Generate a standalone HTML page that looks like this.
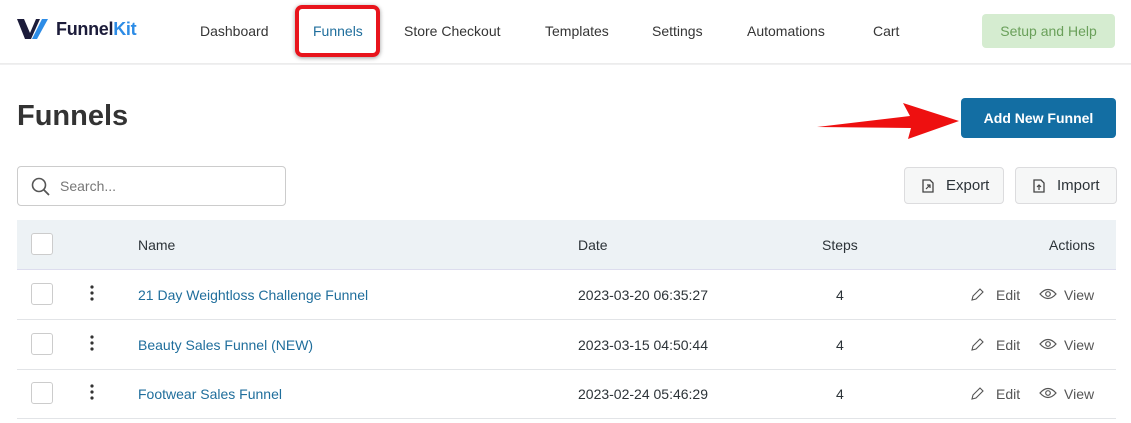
<!DOCTYPE html>
<html><head><meta charset="utf-8"><style>
*{box-sizing:border-box;margin:0;padding:0}
body{width:1131px;height:423px;background:#f0f0f1;font-family:"Liberation Sans",sans-serif;position:relative;overflow:hidden;color:#2c3338}
.top{position:absolute;left:0;top:0;width:1131px;height:64px;background:#fff;border-bottom:1px solid #ececec}
.nav{position:absolute;top:23px;font-size:14px;color:#353535}
.main{position:absolute;left:0;top:65px;width:1131px;height:358px;background:#fff}
.abs{position:absolute}
.row{position:absolute;left:17px;width:1099px;height:50px;border-bottom:1px solid #e2e4e7;font-size:14px}
.cb{position:absolute;left:14px;width:22px;height:22px;border:1px solid #ccc;border-radius:3px;background:#fff}
.btn{position:absolute;border:1px solid #dcdcde;border-radius:4px;background:#f6f7f7;font-size:15px;color:#2c3338}
</style></head><body>
<div class="top">
 <svg class="abs" style="left:17px;top:18px" width="34" height="22" viewBox="0 0 34 22"><path d="M0 1h7l6 14 6-14h4l-9 20h-6z" fill="#1c1c3a"/><path d="M25 1h6l-11 20h-5z" fill="#2d8ce6"/></svg>
 <div class="abs" style="left:56px;top:19px;font-size:18px;font-weight:bold;color:#1c1c3a;letter-spacing:-0.3px">Funnel<span style="color:#2d8ce6">Kit</span></div>
 <div class="nav" style="left:200px">Dashboard</div>
 <div class="abs" style="left:295px;top:5px;width:85px;height:52px;border:4px solid #e8141c;border-radius:7px;box-shadow:0 1px 4px rgba(0,0,0,.4)"></div>
 <div class="nav" style="left:313px;color:#1f6e9c">Funnels</div>
 <div class="nav" style="left:404px">Store Checkout</div>
 <div class="nav" style="left:545px">Templates</div>
 <div class="nav" style="left:652px">Settings</div>
 <div class="nav" style="left:747px">Automations</div>
 <div class="nav" style="left:873px">Cart</div>
 <div class="abs" style="left:982px;top:14px;width:133px;height:34px;background:#d5ecd0;border-radius:4px;color:#6aa05a;font-size:14px;text-align:center;line-height:34px">Setup and Help</div>
</div>
<div class="main">
 <div class="abs" style="left:17px;top:35px;font-size:29px;font-weight:600;color:#333">Funnels</div>
 <svg class="abs" style="left:815px;top:34px" width="145" height="42" viewBox="0 0 145 42"><path d="M2 28 L95 17 L88 4 L144 22 L93 40 L96 29 Z" fill="#ee1010"/></svg>
 <div class="abs" style="left:961px;top:33px;width:155px;height:40px;background:#136ea3;border-radius:4px;color:#fff;font-weight:bold;font-size:14px;text-align:center;line-height:40px">Add New Funnel</div>
 <div class="abs" style="left:17px;top:101px;width:269px;height:40px;border:1px solid #ccc;border-radius:4px"></div>
 <svg class="abs" style="left:31px;top:112px" width="20" height="20" viewBox="0 0 20 20"><circle cx="8" cy="8" r="6.5" stroke="#555" stroke-width="1.6" fill="none"/><path d="M13 13l5 5" stroke="#555" stroke-width="1.8"/></svg>
 <div class="abs" style="left:60px;top:113px;font-size:14px;color:#777">Search...</div>
 <div class="btn" style="left:904px;top:102px;width:100px;height:37px"><svg class="abs" style="left:15px;top:10px" width="16" height="16" viewBox="0 0 16 16"><path d="M3 2h7l3 3v9H3z" fill="none" stroke="#444" stroke-width="1.3"/><path d="M6 11l4-4M7 7h3v3" fill="none" stroke="#444" stroke-width="1.2"/></svg><span class="abs" style="left:41px;top:9px">Export</span></div>
 <div class="btn" style="left:1015px;top:102px;width:102px;height:37px"><svg class="abs" style="left:15px;top:10px" width="16" height="16" viewBox="0 0 16 16"><path d="M3 2h7l3 3v9H3z" fill="none" stroke="#444" stroke-width="1.3"/><path d="M8 7v5M6 9l2-2 2 2" fill="none" stroke="#444" stroke-width="1.2"/></svg><span class="abs" style="left:41px;top:9px">Import</span></div>
 <div class="row" style="top:155px;background:#edf2f5;border:none;border-bottom:1px solid #dde"><div class="cb" style="top:13px"></div>
  <span class="abs" style="left:121px;top:17px">Name</span><span class="abs" style="left:561px;top:17px">Date</span><span class="abs" style="left:805px;top:17px">Steps</span><span class="abs" style="left:1032px;top:17px">Actions</span></div>
 <div class="row" style="top:205px"><div class="cb" style="top:13px"></div><svg class="abs" style="left:73px;top:15px" width="4" height="16"><circle cx="2" cy="2" r="1.6" fill="#333"/><circle cx="2" cy="8" r="1.6" fill="#333"/><circle cx="2" cy="14" r="1.6" fill="#333"/></svg>
  <span class="abs" style="left:121px;top:17px;color:#1f6e9c">21 Day Weightloss Challenge Funnel</span><span class="abs" style="left:561px;top:17px">2023-03-20 06:35:27</span><span class="abs" style="left:819px;top:17px">4</span>
  <svg class="abs" style="left:953px;top:17px" width="15" height="15" viewBox="0 0 15 15"><path d="M2 13l1-4 7-7 3 3-7 7z" fill="none" stroke="#555" stroke-width="1.1"/></svg><span class="abs" style="left:979px;top:17px;color:#555">Edit</span>
  <svg class="abs" style="left:1022px;top:18px" width="18" height="12" viewBox="0 0 18 12"><path d="M1 6q8-9 16 0q-8 9-16 0z" fill="none" stroke="#555" stroke-width="1.2"/><circle cx="9" cy="6" r="2.3" fill="none" stroke="#555" stroke-width="1.2"/></svg><span class="abs" style="left:1047px;top:17px;color:#555">View</span></div>
 <div class="row" style="top:255px"><div class="cb" style="top:13px"></div><svg class="abs" style="left:73px;top:15px" width="4" height="16"><circle cx="2" cy="2" r="1.6" fill="#333"/><circle cx="2" cy="8" r="1.6" fill="#333"/><circle cx="2" cy="14" r="1.6" fill="#333"/></svg>
  <span class="abs" style="left:121px;top:17px;color:#1f6e9c">Beauty Sales Funnel (NEW)</span><span class="abs" style="left:561px;top:17px">2023-03-15 04:50:44</span><span class="abs" style="left:819px;top:17px">4</span>
  <svg class="abs" style="left:953px;top:17px" width="15" height="15" viewBox="0 0 15 15"><path d="M2 13l1-4 7-7 3 3-7 7z" fill="none" stroke="#555" stroke-width="1.1"/></svg><span class="abs" style="left:979px;top:17px;color:#555">Edit</span>
  <svg class="abs" style="left:1022px;top:18px" width="18" height="12" viewBox="0 0 18 12"><path d="M1 6q8-9 16 0q-8 9-16 0z" fill="none" stroke="#555" stroke-width="1.2"/><circle cx="9" cy="6" r="2.3" fill="none" stroke="#555" stroke-width="1.2"/></svg><span class="abs" style="left:1047px;top:17px;color:#555">View</span></div>
 <div class="row" style="top:304px"><div class="cb" style="top:13px"></div><svg class="abs" style="left:73px;top:15px" width="4" height="16"><circle cx="2" cy="2" r="1.6" fill="#333"/><circle cx="2" cy="8" r="1.6" fill="#333"/><circle cx="2" cy="14" r="1.6" fill="#333"/></svg>
  <span class="abs" style="left:121px;top:17px;color:#1f6e9c">Footwear Sales Funnel</span><span class="abs" style="left:561px;top:17px">2023-02-24 05:46:29</span><span class="abs" style="left:819px;top:17px">4</span>
  <svg class="abs" style="left:953px;top:17px" width="15" height="15" viewBox="0 0 15 15"><path d="M2 13l1-4 7-7 3 3-7 7z" fill="none" stroke="#555" stroke-width="1.1"/></svg><span class="abs" style="left:979px;top:17px;color:#555">Edit</span>
  <svg class="abs" style="left:1022px;top:18px" width="18" height="12" viewBox="0 0 18 12"><path d="M1 6q8-9 16 0q-8 9-16 0z" fill="none" stroke="#555" stroke-width="1.2"/><circle cx="9" cy="6" r="2.3" fill="none" stroke="#555" stroke-width="1.2"/></svg><span class="abs" style="left:1047px;top:17px;color:#555">View</span></div>
</div>
</body></html>
